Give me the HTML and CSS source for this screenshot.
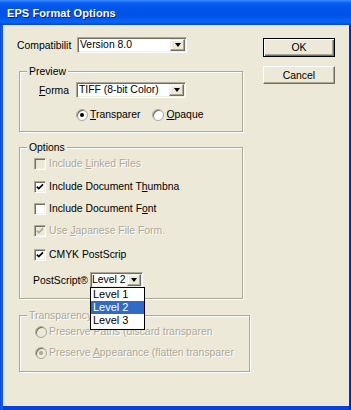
FILE: index.html
```html
<!DOCTYPE html>
<html>
<head>
<meta charset="utf-8">
<link rel="stylesheet" href="styles.css">
</head>
<body>
<div class="window">
  <div class="titlebar"><span class="title">EPS Format Options</span></div>
  <div class="client">
    <div class="left">
      <div class="compat">
        <span class="lbl lbl-compat">Compatibilit</span>
        <div class="select sel-wide"><span class="val">Version 8.0</span><span class="drop"><i class="tri"></i></span></div>
      </div>

      <div class="group g-preview">
        <span class="legend">Preview</span>
        <div class="fmt">
          <span class="lbl lbl-fmt"><u>F</u>orma</span>
          <div class="select sel-wide"><span class="val">TIFF (8-bit Color)</span><span class="drop"><i class="tri"></i></span></div>
        </div>
        <div class="radios">
          <span class="radio on"></span><span class="rlbl rlbl-1"><u>T</u>ransparer</span>
          <span class="radio"></span><span class="rlbl"><u>O</u>paque</span>
        </div>
      </div>

      <div class="group g-options">
        <span class="legend">Options</span>
        <div class="chk-list">
          <div class="chk-row disabled"><span class="chk"></span><span class="clbl">Include <u>L</u>inked Files</span></div>
          <div class="chk-row r2"><span class="chk"><svg viewBox="0 0 8 8" width="8" height="8"><polyline points="0.8,3.6 2.8,5.6 7,1.4" fill="none" stroke="#000" stroke-width="1.7"/></svg></span><span class="clbl">Include Document T<u>h</u>umbna</span></div>
          <div class="chk-row"><span class="chk"></span><span class="clbl">Include Document F<u>o</u>nt</span></div>
          <div class="chk-row disabled"><span class="chk"><svg viewBox="0 0 8 8" width="8" height="8"><polyline points="0.8,3.6 2.8,5.6 7,1.4" fill="none" stroke="#ACA899" stroke-width="1.7"/></svg></span><span class="clbl">Use <u>J</u>apanese File Form.</span></div>
          <div class="chk-row r5"><span class="chk"><svg viewBox="0 0 8 8" width="8" height="8"><polyline points="0.8,3.6 2.8,5.6 7,1.4" fill="none" stroke="#000" stroke-width="1.7"/></svg></span><span class="clbl">CMYK PostScrip</span></div>
        </div>
        <div class="ps-row">
          <span class="lbl lbl-ps">PostScript®</span>
          <div class="select sel-ps"><span class="val">Level 2</span><span class="drop"><i class="tri"></i></span>
            <div class="listbox">
              <div class="opt">Level 1</div>
              <div class="opt sel">Level 2</div>
              <div class="opt">Level 3</div>
            </div>
          </div>
        </div>
      </div>

      <div class="group g-trans disabled">
        <span class="legend">Transparency</span>
        <div class="t-row"><span class="radio"></span><span class="rlbl">Preserve Paths (discard transparen</span></div>
        <div class="t-row t-row2"><span class="radio on"></span><span class="rlbl">Preserve <u>A</u>ppearance (flatten transparer</span></div>
      </div>
    </div>

    <div class="right">
      <div class="btn default">OK</div>
      <div class="btn btn-cancel">Cancel</div>
    </div>
  </div>
</div>
</body>
</html>
```

FILE: styles.css
```css
html, body {
  margin: 0;
  padding: 0;
  background: #0831D9;
}
body {
  font-family: "Liberation Sans", Arial, sans-serif;
  font-size: 10.4px;
  color: #000;
}
u { text-decoration: underline; text-underline-offset: 1px; }

.window {
  width: 351px;
  height: 410px;
  display: flex;
  flex-direction: column;
  background: linear-gradient(to right, #0842D8 0, #166AEE 2px, #0842D8 3px, #0842D8 348px, #0019CF 351px);
  overflow: hidden;
}
.titlebar {
  height: 25px;
  flex: none;
  display: flex;
  align-items: center;
  padding-left: 7px;
  background: linear-gradient(to bottom, #3A8CFF 0, #0A5EF2 3px, #0055EA 8px, #0053E6 16px, #0A64F8 22px, #0046D8 25px);
}
.title {
  color: #fff;
  font-weight: bold;
  font-size: 11px;
  letter-spacing: 0.1px;
  text-shadow: 1px 1px #0A1E88;
  margin-top: 1px;
}
.client {
  flex: 1;
  margin: 0 2px 4px 3px;
  background: #ECE9D8;
  display: flex;
  position: relative;
}

.left {
  width: 247px;
  flex: none;
  padding: 12px 0 0 14px;
  box-sizing: border-box;
}
.right {
  padding: 13px 0 0 13px;
  display: flex;
  flex-direction: column;
  gap: 9px;
}

.lbl { white-space: nowrap; overflow: hidden; flex: none; }
.lbl-compat { width: 60px; }
.lbl-fmt { width: 37px; }
.lbl-ps { width: 57px; }

.compat, .fmt, .ps-row {
  display: flex;
  align-items: center;
  height: 16px;
}

/* select */
.select {
  position: relative;
  height: 16px;
  box-sizing: border-box;
  background: #fff;
  border: 1px solid;
  border-color: #ACA899 #fff #fff #ACA899;
  box-shadow: inset 1px 1px #716F64, inset -1px -1px #F1EFE2;
  display: flex;
  align-items: center;
  padding-left: 2px;
  flex: none;
}
.sel-wide { width: 110px; }
.sel-ps { width: 53px; padding-left: 1px; }
.val { flex: 1; white-space: nowrap; overflow: hidden; line-height: 12px; }
.drop {
  width: 15px;
  height: 12px;
  margin-right: 1px;
  box-sizing: border-box;
  background: #ECE9D8;
  border: 1px solid;
  border-color: #F1EFE2 #716F64 #716F64 #F1EFE2;
  box-shadow: inset -1px -1px #ACA899, inset 1px 1px #fff;
  display: flex;
  align-items: center;
  justify-content: center;
  flex: none;
}
.sel-ps .drop { width: 14px; }
.tri {
  width: 0;
  height: 0;
  border-left: 3.5px solid transparent;
  border-right: 3.5px solid transparent;
  border-top: 4px solid #000;
}

/* group boxes */
.group {
  position: relative;
  margin-left: 2px;
  box-sizing: border-box;
  border: 1px solid #ACA899;
  box-shadow: 1px 1px #fff, inset 1px 1px #fff;
}
.legend {
  position: absolute;
  top: -7px;
  left: 7px;
  padding: 0 2px;
  line-height: 13px;
  background: #ECE9D8;
  white-space: nowrap;
}
.g-preview {
  width: 224px;
  height: 61px;
  margin-top: 18px;
}
.g-options {
  width: 224px;
  height: 152px;
  margin-top: 15px;
}
.g-trans {
  width: 231px;
  height: 57px;
  margin-top: 16px;
  padding-top: 10px;
}

.fmt {
  margin: 10px 0 0 19px;
}
.radios {
  display: flex;
  align-items: center;
  height: 12px;
  margin: 11px 0 0 56px;
}
.radio {
  width: 12px;
  height: 12px;
  box-sizing: border-box;
  border-radius: 50%;
  background: #fff;
  border: 1px solid #ACA899;
  box-shadow: inset 1px 1px #716F64;
  display: inline-flex;
  align-items: center;
  justify-content: center;
  flex: none;
}
.radio.on::after {
  content: "";
  width: 4px;
  height: 4px;
  border-radius: 50%;
  background: #000;
}
.rlbl { margin-left: 2px; white-space: nowrap; line-height: 12px; }
.rlbl-1 { margin-right: 12px; }

.chk-list {
  display: flex;
  flex-direction: column;
  gap: 10px;
  padding: 10px 0 0 14px;
}
.chk-row {
  display: flex;
  align-items: center;
  height: 12px;
}
.r2 { margin-top: 1px; }
.r5 { margin-top: 2px; }
.chk {
  width: 12px;
  height: 12px;
  box-sizing: border-box;
  background: #fff;
  border: 1px solid;
  border-color: #ACA899 #fff #fff #ACA899;
  box-shadow: inset 1px 1px #716F64, inset -1px -1px #F1EFE2;
  display: flex;
  align-items: center;
  justify-content: center;
  flex: none;
}
.clbl { margin-left: 3px; white-space: nowrap; line-height: 12px; }
.disabled .clbl, .disabled .rlbl, .g-trans .legend {
  color: #ACA899;
  text-shadow: 1px 1px #fff;
}
.disabled .chk { background: #ECE9D8; }
.g-trans .radio { background: #ECE9D8; }
.g-trans .radio.on::after { background: #ACA899; }

.ps-row {
  margin: 11px 0 0 13px;
}

.listbox {
  position: absolute;
  top: 100%;
  left: -1px;
  width: 55px;
  box-sizing: border-box;
  background: #fff;
  border: 1px solid #000;
  padding-bottom: 2px;
  z-index: 5;
}
.opt {
  height: 13px;
  line-height: 13px;
  padding-left: 2px;
  white-space: nowrap;
  font-size: 11px;
}
.opt.sel {
  background: #316AC5;
  color: #fff;
}

.t-row {
  display: flex;
  align-items: center;
  height: 12px;
  margin-left: 15px;
}
.t-row2 { margin-top: 9px; }

.btn {
  width: 72px;
  height: 19px;
  box-sizing: border-box;
  display: flex;
  align-items: center;
  justify-content: center;
  background: #ECE9D8;
  border: 1px solid;
  border-color: #fff #716F64 #716F64 #fff;
  box-shadow: inset -1px -1px #ACA899;
}
.btn.default {
  border: 1px solid #000;
  box-shadow: inset 1px 1px #fff, inset -1px -1px #716F64, inset -2px -2px #ACA899;
}
.btn-cancel { height: 18px; }
```
